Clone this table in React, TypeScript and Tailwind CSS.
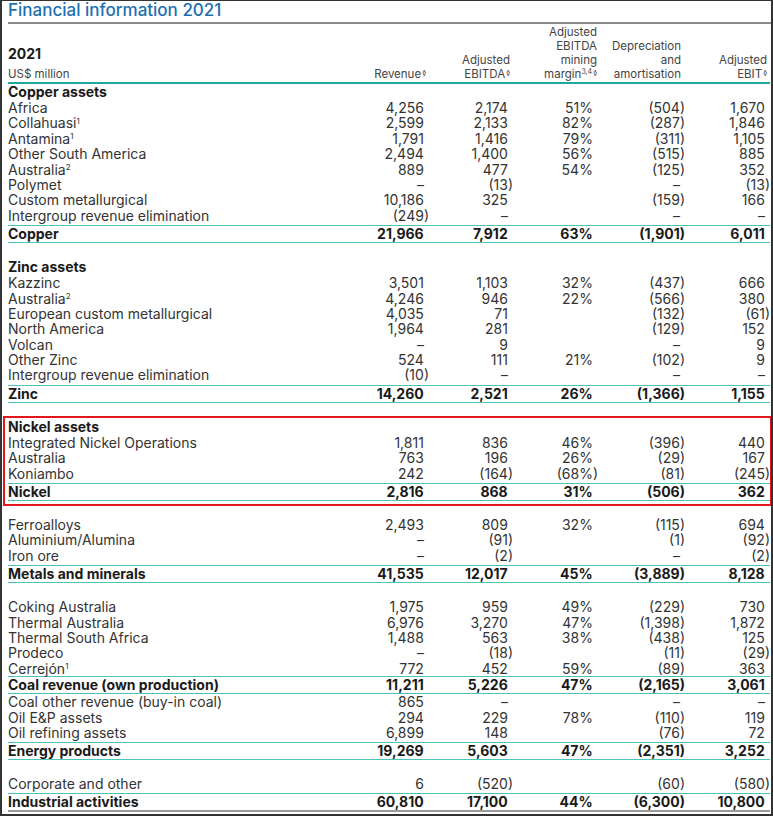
import type { ReactNode } from 'react';

type Kind = 'head' | 'item' | 'total' | 'subtotal' | 'spacer';

interface Row {
  kind: Kind;
  label?: ReactNode;
  vals?: string[];
}

const GRID = 'grid grid-cols-[1fr_84px_84px_85px_87px_85px]';

const sup = (n: string) => <sup className="text-[8px] top-[-0.6em]">{n}</sup>;

const copper: Row[] = [
  { kind: 'head', label: 'Copper assets' },
  { kind: 'item', label: 'Africa', vals: ['4,256', '2,174', '51%', '(504)', '1,670'] },
  { kind: 'item', label: <>Collahuasi{sup('1')}</>, vals: ['2,599', '2,133', '82%', '(287)', '1,846'] },
  { kind: 'item', label: <>Antamina{sup('1')}</>, vals: ['1,791', '1,416', '79%', '(311)', '1,105'] },
  { kind: 'item', label: 'Other South America', vals: ['2,494', '1,400', '56%', '(515)', '885'] },
  { kind: 'item', label: <>Australia{sup('2')}</>, vals: ['889', '477', '54%', '(125)', '352'] },
  { kind: 'item', label: 'Polymet', vals: ['–', '(13)', '', '–', '(13)'] },
  { kind: 'item', label: 'Custom metallurgical', vals: ['10,186', '325', '', '(159)', '166'] },
  { kind: 'item', label: 'Intergroup revenue elimination', vals: ['(249)', '–', '', '–', '–'] },
  { kind: 'total', label: 'Copper', vals: ['21,966', '7,912', '63%', '(1,901)', '6,011'] },
  { kind: 'spacer' },
  { kind: 'head', label: 'Zinc assets' },
  { kind: 'item', label: 'Kazzinc', vals: ['3,501', '1,103', '32%', '(437)', '666'] },
  { kind: 'item', label: <>Australia{sup('2')}</>, vals: ['4,246', '946', '22%', '(566)', '380'] },
  { kind: 'item', label: 'European custom metallurgical', vals: ['4,035', '71', '', '(132)', '(61)'] },
  { kind: 'item', label: 'North America', vals: ['1,964', '281', '', '(129)', '152'] },
  { kind: 'item', label: 'Volcan', vals: ['–', '9', '', '–', '9'] },
  { kind: 'item', label: 'Other Zinc', vals: ['524', '111', '21%', '(102)', '9'] },
  { kind: 'item', label: 'Intergroup revenue elimination', vals: ['(10)', '–', '', '–', '–'] },
  { kind: 'total', label: 'Zinc', vals: ['14,260', '2,521', '26%', '(1,366)', '1,155'] },
  { kind: 'spacer' },
];

const nickel: Row[] = [
  { kind: 'head', label: 'Nickel assets' },
  { kind: 'item', label: 'Integrated Nickel Operations', vals: ['1,811', '836', '46%', '(396)', '440'] },
  { kind: 'item', label: 'Australia', vals: ['763', '196', '26%', '(29)', '167'] },
  { kind: 'item', label: 'Koniambo', vals: ['242', '(164)', '(68%)', '(81)', '(245)'] },
  { kind: 'total', label: 'Nickel', vals: ['2,816', '868', '31%', '(506)', '362'] },
];

const rest: Row[] = [
  { kind: 'spacer' },
  { kind: 'item', label: 'Ferroalloys', vals: ['2,493', '809', '32%', '(115)', '694'] },
  { kind: 'item', label: 'Aluminium/Alumina', vals: ['–', '(91)', '', '(1)', '(92)'] },
  { kind: 'item', label: 'Iron ore', vals: ['–', '(2)', '', '–', '(2)'] },
  { kind: 'total', label: 'Metals and minerals', vals: ['41,535', '12,017', '45%', '(3,889)', '8,128'] },
  { kind: 'spacer' },
  { kind: 'item', label: 'Coking Australia', vals: ['1,975', '959', '49%', '(229)', '730'] },
  { kind: 'item', label: 'Thermal Australia', vals: ['6,976', '3,270', '47%', '(1,398)', '1,872'] },
  { kind: 'item', label: 'Thermal South Africa', vals: ['1,488', '563', '38%', '(438)', '125'] },
  { kind: 'item', label: 'Prodeco', vals: ['–', '(18)', '', '(11)', '(29)'] },
  { kind: 'item', label: <>Cerrejón{sup('1')}</>, vals: ['772', '452', '59%', '(89)', '363'] },
  { kind: 'subtotal', label: 'Coal revenue (own production)', vals: ['11,211', '5,226', '47%', '(2,165)', '3,061'] },
  { kind: 'item', label: 'Coal other revenue (buy-in coal)', vals: ['865', '–', '', '–', '–'] },
  { kind: 'item', label: 'Oil E&P assets', vals: ['294', '229', '78%', '(110)', '119'] },
  { kind: 'item', label: 'Oil refining assets', vals: ['6,899', '148', '', '(76)', '72'] },
  { kind: 'total', label: 'Energy products', vals: ['19,269', '5,603', '47%', '(2,351)', '3,252'] },
  { kind: 'spacer' },
  { kind: 'item', label: 'Corporate and other', vals: ['6', '(520)', '', '(60)', '(580)'] },
];

function Num({ v }: { v: string }) {
  if (!v) return <div />;
  const paren = v.endsWith(')');
  return (
    <div className="text-right whitespace-nowrap">
      {v}
      {!paren && <span className="invisible">)</span>}
    </div>
  );
}

function TableRow({ row }: { row: Row }) {
  if (row.kind === 'spacer') return <div className="h-4" />;
  if (row.kind === 'head') {
    return <div className="h-4 leading-4 font-bold text-[#1a1a1a]">{row.label}</div>;
  }
  if (row.kind === 'total' || row.kind === 'subtotal') {
    const gap = row.kind === 'total' ? 'mt-[2px]' : 'mt-0';
    return (
      <div className={`${GRID} ${gap} h-[18px] leading-4 font-bold text-[#1a1a1a] border-y border-[#4cc3bb]`}>
        <div className="whitespace-nowrap">{row.label}</div>
        {row.vals?.map((v, i) => <Num key={i} v={v} />)}
      </div>
    );
  }
  return (
    <div className={`${GRID} h-[15.4px] leading-[15.4px] text-[#333]`}>
      <div className="whitespace-nowrap">{row.label}</div>
      {row.vals?.map((v, i) => <Num key={i} v={v} />)}
    </div>
  );
}

const dia = <sup className="text-[7px] top-[-0.3em] ml-[1px]">◊</sup>;

function Header() {
  return (
    <div className={`${GRID} pt-px pb-px text-[11.5px] leading-[14px] text-[#444] border-b-2 border-[#1fa89f] items-end`}>
      <div className="flex flex-col">
        <span className="text-[14px] font-bold text-[#1a1a1a] mb-[6px]">2021</span>
        <span>US$ million</span>
      </div>
      <div className="text-right pr-[3px]">Revenue{dia}</div>
      <div className="text-right pr-[3px]">
        Adjusted
        <br />
        EBITDA{dia}
      </div>
      <div className="text-right pr-px">
        Adjusted
        <br />
        EBITDA
        <br />
        mining
        <br />
        margin<sup className="text-[7px] top-[-0.6em]">3,4</sup>
        {dia}
      </div>
      <div className="text-right pr-[4px]">
        Depreciation
        <br />
        and
        <br />
        amortisation
      </div>
      <div className="text-right pr-[3px]">
        Adjusted
        <br />
        EBIT{dia}
      </div>
    </div>
  );
}

export default function App() {
  return (
    <div className="w-[773px] h-[816px] bg-white border-x-2 border-b-2 border-t border-[#333] overflow-hidden font-['Inter',sans-serif] text-[14px]">
      <div className="pl-[6px] pr-px">
        <div className="h-[23px] leading-[19px] text-[17px] font-medium text-[#1d70b0] border-b-2 border-[#8c8c8c] mr-[-1px]">
          Financial information 2021
        </div>
        <Header />
        {copper.map((r, i) => (
          <TableRow key={`c${i}`} row={r} />
        ))}
        <div className="relative">
          <div className="absolute -left-[5px] -right-[2px] -top-[3px] -bottom-[5px] border-2 border-[#e3161b] pointer-events-none" />
          {nickel.map((r, i) => (
            <TableRow key={`n${i}`} row={r} />
          ))}
        </div>
        {rest.map((r, i) => (
          <TableRow key={`r${i}`} row={r} />
        ))}
        <div className={`${GRID} mt-px h-[19px] leading-4 font-bold text-[#1a1a1a] border-t border-[#4cc3bb] border-b-2 border-b-[#9a9a9a]`}>
          <div>Industrial activities</div>
          {['60,810', '17,100', '44%', '(6,300)', '10,800'].map((v, i) => (
            <Num key={i} v={v} />
          ))}
        </div>
      </div>
    </div>
  );
}
